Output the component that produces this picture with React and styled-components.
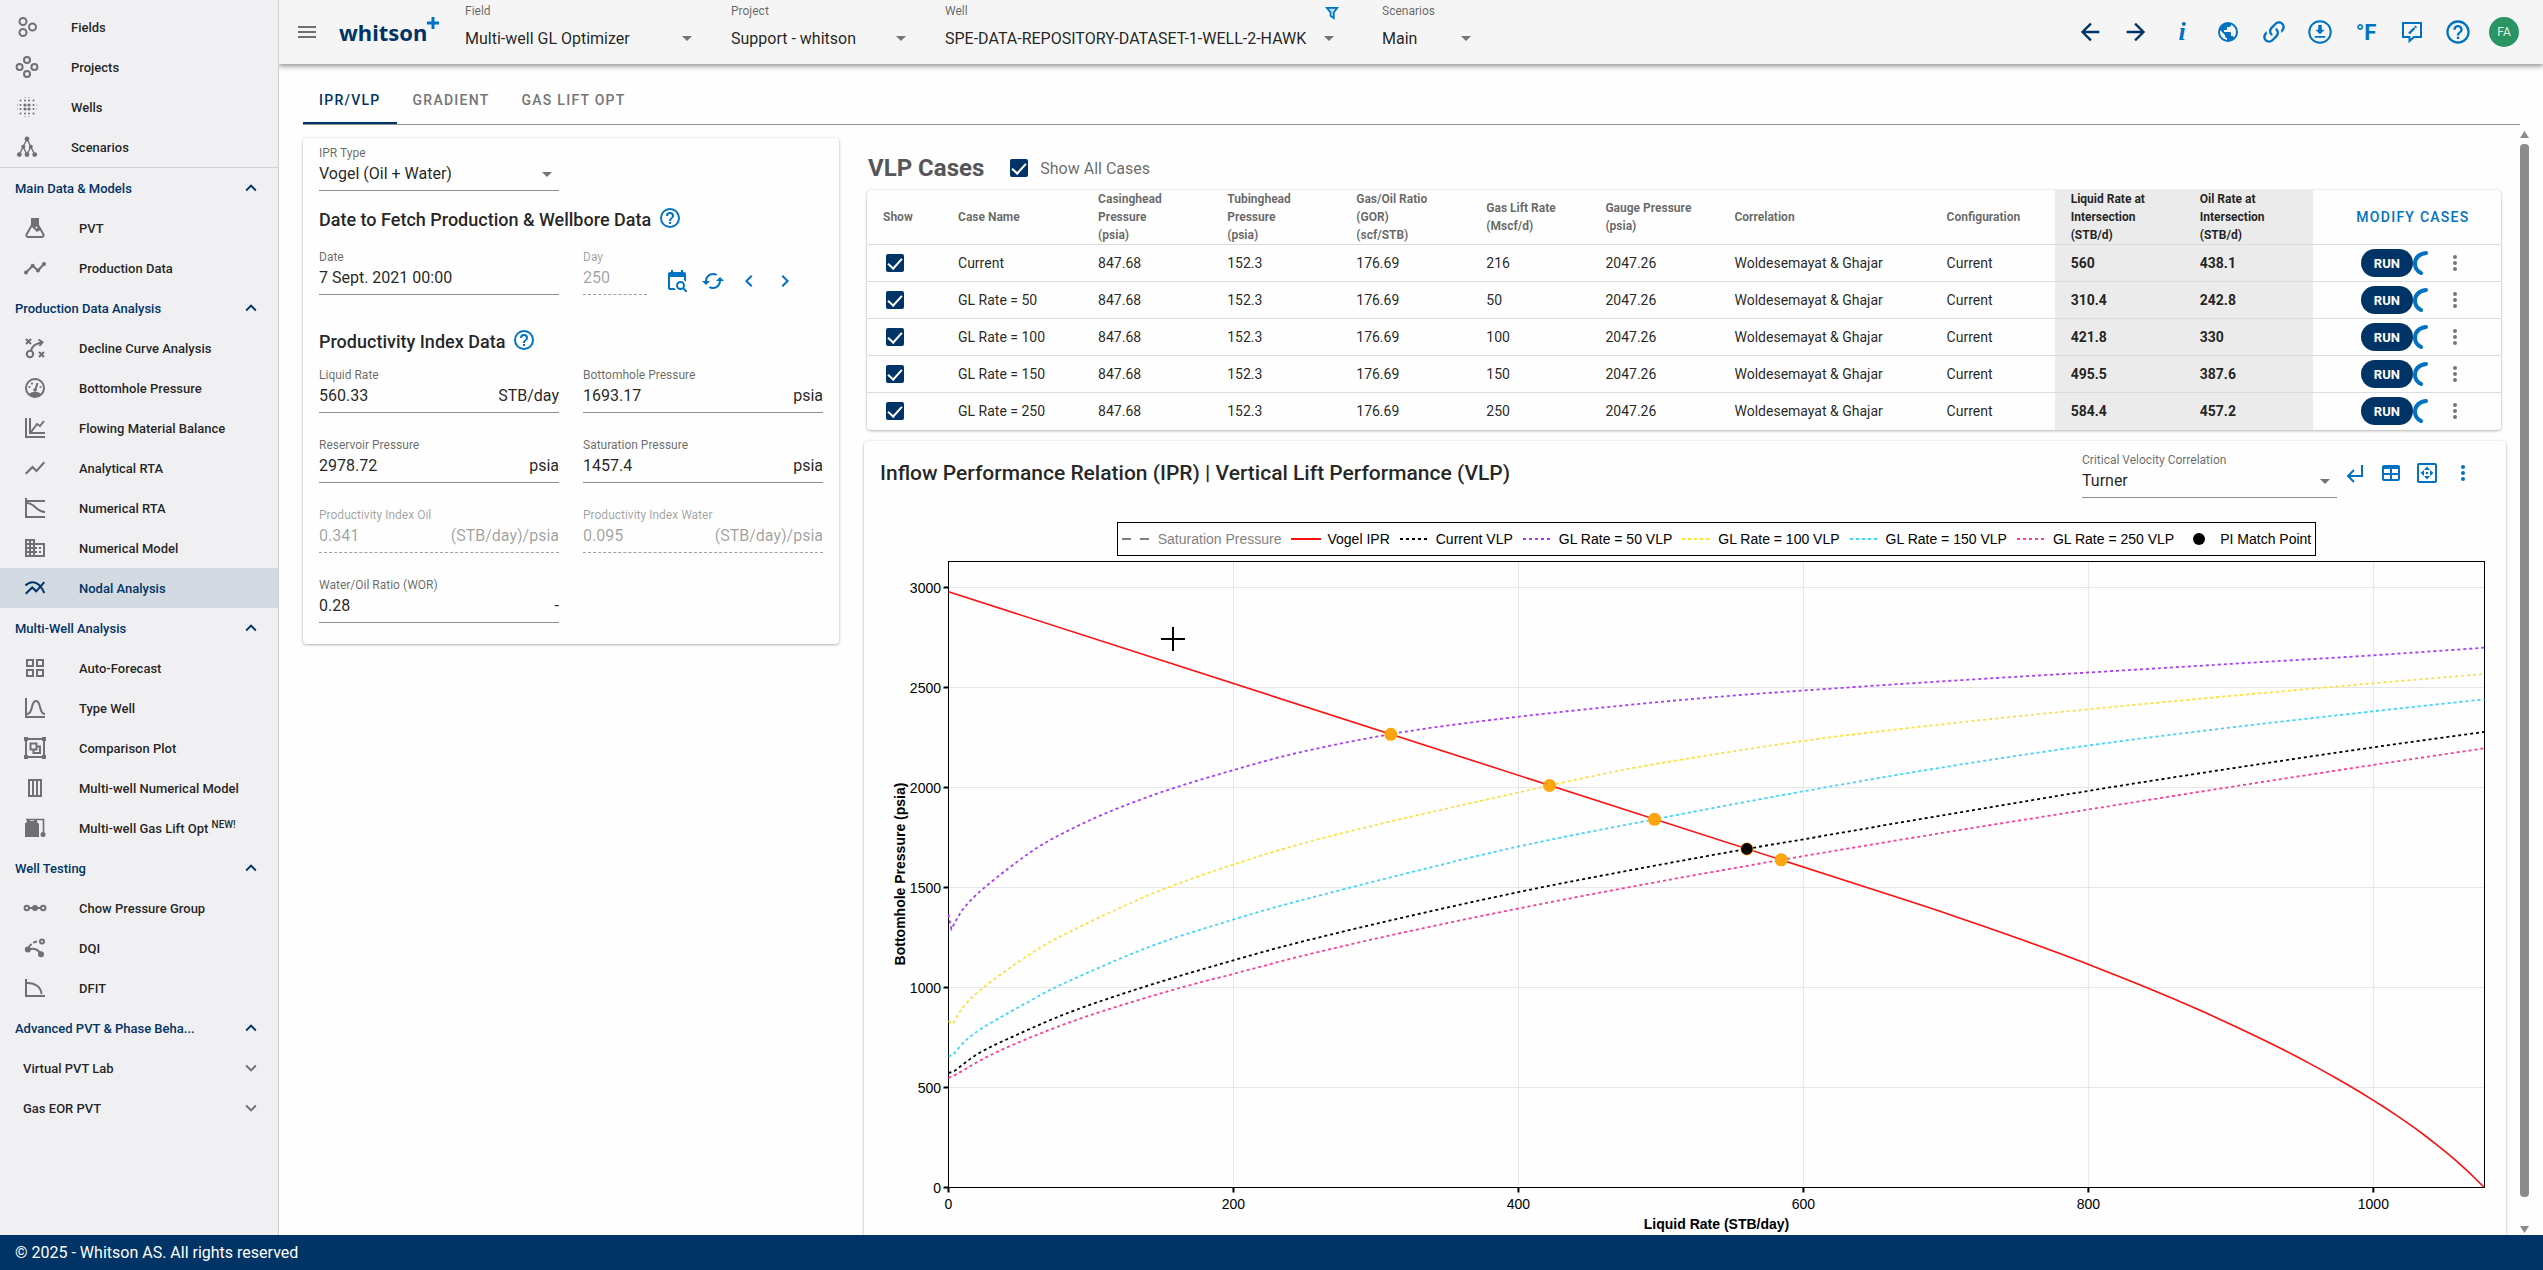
import React from 'react';
import styled, { createGlobalStyle, css } from 'styled-components';

const navy = '#003366';
const blue = '#0072c3';
const text = 'rgba(0,0,0,0.87)';
const muted = 'rgba(0,0,0,0.6)';
const disabled = 'rgba(0,0,0,0.38)';

const GlobalStyle = createGlobalStyle`
    * {
        box-sizing: border-box;
    }
    body {
        margin: 0;
        background: #fefefe;
        color: ${text};
        font-family: Roboto, "Liberation Sans", sans-serif;
        font-size: 14px;
    }
    button, input, select {
        font-family: inherit;
        color: inherit;
    }
`;

/* ---------- icons ---------- */

const Svg = styled.svg`
    display: block;
    flex: none;
    width: ${({$size})=> $size || 24}px;
    height: ${({$size})=> $size || 24}px;
    fill: ${({$line})=> $line ? 'none' : 'currentColor'};
    stroke: ${({$line})=> $line ? 'currentColor' : 'none'};
    stroke-width: 2;
`;

const paths = {
    menu: 'M3,6H21V8H3V6M3,11H21V13H3V11M3,16H21V18H3V16Z',
    chevronUp: 'M7.41,15.41L12,10.83L16.59,15.41L18,14L12,8L6,14L7.41,15.41Z',
    chevronDown: 'M7.41,8.58L12,13.17L16.59,8.58L18,10L12,16L6,10L7.41,8.58Z',
    chevronLeft: 'M15.41,16.58L10.83,12L15.41,7.41L14,6L8,12L14,18L15.41,16.58Z',
    chevronRight: 'M8.59,16.58L13.17,12L8.59,7.41L10,6L16,12L10,18L8.59,16.58Z',
    caret: 'M7,10L12,15L17,10H7Z',
    dots: 'M12,16A2,2 0 0,1 14,18A2,2 0 0,1 12,20A2,2 0 0,1 10,18A2,2 0 0,1 12,16M12,10A2,2 0 0,1 14,12A2,2 0 0,1 12,14A2,2 0 0,1 10,12A2,2 0 0,1 12,10M12,4A2,2 0 0,1 14,6A2,2 0 0,1 12,8A2,2 0 0,1 10,6A2,2 0 0,1 12,4Z',
    arrowLeft: 'M20,11V13H8L13.5,18.5L12.08,19.92L4.16,12L12.08,4.08L13.5,5.5L8,11H20Z',
    arrowRight: 'M4,11V13H16L10.5,18.5L11.92,19.92L19.84,12L11.92,4.08L10.5,5.5L16,11H4Z',
    earth: 'M17.9,17.39C17.64,16.59 16.89,16 16,16H15V13A1,1 0 0,0 14,12H8V10H10A1,1 0 0,0 11,9V7H13A2,2 0 0,0 15,5V4.59C17.93,5.77 20,8.64 20,12C20,14.08 19.2,15.97 17.9,17.39M11,19.93C7.05,19.44 4,16.08 4,12C4,11.38 4.08,10.78 4.21,10.21L9,15V16A2,2 0 0,0 11,18M12,2A10,10 0 0,0 2,12A10,10 0 0,0 12,22A10,10 0 0,0 22,12A10,10 0 0,0 12,2Z',
    help: 'M11,18H13V16H11V18M12,2A10,10 0 0,0 2,12A10,10 0 0,0 12,22A10,10 0 0,0 22,12A10,10 0 0,0 12,2M12,20C7.59,20 4,16.41 4,12C4,7.59 7.59,4 12,4C16.41,4 20,7.59 20,12C20,16.41 16.41,20 12,20M12,6A4,4 0 0,0 8,10H10A2,2 0 0,1 12,8A2,2 0 0,1 14,10C14,12 11,11.75 11,15H13C13,12.75 16,12.5 16,10A4,4 0 0,0 12,6Z',
    link: 'M10.59,13.41C11,13.8 11,14.44 10.59,14.83C10.2,15.22 9.56,15.22 9.17,14.83C7.22,12.88 7.22,9.71 9.17,7.76V7.76L12.71,4.22C14.66,2.27 17.83,2.27 19.78,4.22C21.73,6.17 21.73,9.34 19.78,11.29L18.29,12.78C18.3,11.96 18.17,11.14 17.89,10.36L18.36,9.88C19.54,8.71 19.54,6.81 18.36,5.64C17.19,4.46 15.29,4.46 14.12,5.64L10.59,9.17C9.41,10.34 9.41,12.24 10.59,13.41M13.41,9.17C13.8,8.78 14.44,8.78 14.83,9.17C16.78,11.12 16.78,14.29 14.83,16.24V16.24L11.29,19.78C9.34,21.73 6.17,21.73 4.22,19.78C2.27,17.83 2.27,14.66 4.22,12.71L5.71,11.22C5.7,12.04 5.83,12.86 6.11,13.65L5.64,14.12C4.46,15.29 4.46,17.19 5.64,18.36C6.81,19.54 8.71,19.54 9.88,18.36L13.41,14.83C14.59,13.66 14.59,11.76 13.41,10.59C13,10.2 13,9.56 13.41,9.17Z',
    calendarSearch: 'M15.5,12C18,12 20,14 20,16.5C20,17.38 19.75,18.21 19.31,18.9L22.39,22L21,23.39L17.88,20.32C17.19,20.75 16.37,21 15.5,21C13,21 11,19 11,16.5C11,14 13,12 15.5,12M15.5,14A2.5,2.5 0 0,0 13,16.5A2.5,2.5 0 0,0 15.5,19A2.5,2.5 0 0,0 18,16.5A2.5,2.5 0 0,0 15.5,14M19,8H5V19H9.5C9.81,19.75 10.26,20.42 10.81,21H5C3.89,21 3,20.1 3,19V5C3,3.89 3.89,3 5,3H6V1H8V3H16V1H18V3H19A2,2 0 0,1 21,5V13.03C20.5,12.22 19.8,11.54 19,11V8Z',
    sync: 'M19,8L15,12H18A6,6 0 0,1 12,18C11,18 10.03,17.75 9.2,17.3L7.74,18.76C8.97,19.54 10.43,20 12,20A8,8 0 0,0 20,12H23M6,12A6,6 0 0,1 12,6C13,6 13.97,6.25 14.8,6.7L16.26,5.24C15.03,4.46 13.57,4 12,4A8,8 0 0,0 4,12H1L5,16L9,12',
    table: 'M5,4H19A2,2 0 0,1 21,6V18A2,2 0 0,1 19,20H5A2,2 0 0,1 3,18V6A2,2 0 0,1 5,4M5,8V12H11V8H5M13,8V12H19V8H13M5,14V18H11V14H5M13,14V18H19V14H13Z',
    domain: 'M18,15H16V17H18M18,11H16V13H18M20,19H12V17H14V15H12V13H14V11H12V9H20M10,7H8V5H10M10,11H8V9H10M10,15H8V13H10M10,19H8V17H10M6,7H4V5H6M6,11H4V9H6M6,15H4V13H6M6,19H4V17H6M12,7V3H2V21H22V7H12Z',
    grid: 'M3 11H11V3H3M5 5H9V9H5M13 21H21V13H13M15 15H19V19H15M3 21H11V13H3M5 15H9V19H5M13 3V11H21V3M19 9H15V5H19Z',
    bell: 'M9.96,11.31C10.82,8.1 11.5,6 13,6C14.5,6 15.18,8.1 16.04,11.31C17,14.92 18.1,19 22,19V17C19.8,17 19,14.54 17.97,10.8C17.08,7.46 16.15,4 13,4C9.85,4 8.92,7.46 8.03,10.8C7.03,14.54 6.2,17 4,17V2H2V22H22V20H4V19C7.9,19 9,14.92 9.96,11.31Z',
    lineVariant: 'M3.5,18.5L9.5,12.5L13.5,16.5L22,6.92L20.59,5.5L13.5,13.5L9.5,9.5L2,17L3.5,18.5Z',
};

const Icon = ({name, size})=>(
    <Svg viewBox="0 0 24 24" $size={size} aria-hidden="true"><path fillRule="evenodd" d={paths[name]} /></Svg>
);

const Line = ({size, children})=>(
    <Svg viewBox="0 0 24 24" $size={size} $line aria-hidden="true">{children}</Svg>
);

const Dot = ({x, y, r = 2})=> <circle cx={x} cy={y} r={r} fill="currentColor" stroke="none" />;

const FieldsIcon = ()=>(
    <Line><circle cx="8" cy="6.5" r="3.5" /><circle cx="8" cy="17.5" r="3.5" /><circle cx="17.5" cy="12" r="3.5" /></Line>
);

const ProjectsIcon = ()=>(
    <Line><circle cx="12" cy="5" r="3" /><circle cx="4.6" cy="12" r="3" /><circle cx="19.4" cy="12" r="3" /><circle cx="12" cy="19" r="3" /></Line>
);

const WellsIcon = ()=>(
    <Line>
        {[5.5, 10, 14, 18.5].map(x=> [5.5, 10, 14, 18.5].map(y=>{
            const inner = Math.abs(x - 12) < 3 && Math.abs(y - 12) < 3;
            return <Dot key={`${x}-${y}`} x={x} y={y} r={inner ? 1.6 : 1} />;
        }))}
        {[10, 14].map(v=> [2.5, 21.5].map(e=>(
            <g key={`${v}-${e}`}><Dot x={v} y={e} r={0.5} /><Dot x={e} y={v} r={0.5} /></g>
        )))}
    </Line>
);

const ScenariosIcon = ()=>(
    <Line>
        <path d="M12 4L4.3 19.5M12 4L19.7 19.5M8.2 12L12 19.5M15.8 12L12 19.5" strokeWidth="1.4" />
        <Dot x={12} y={4} r={2.4} /><Dot x={8.2} y={11.8} /><Dot x={15.8} y={11.8} />
        <Dot x={4.3} y={19.6} r={2.4} /><Dot x={12} y={19.6} r={2.4} /><Dot x={19.7} y={19.6} r={2.4} />
    </Line>
);

const FlaskIcon = ()=>(
    <Line>
        <path d="M9 4V9L3.6 18.2A1.8 1.8 0 0 0 5.2 21H18.8A1.8 1.8 0 0 0 20.4 18.2L15 9V4" />
        <path d="M8 2H16V5L15 6V9L17.5 14L14 16L9 11V6L8 5Z" fill="currentColor" stroke="none" />
        <circle cx="13.5" cy="11.5" r="1" fill="#f0f0f3" stroke="none" />
    </Line>
);

const TimelineIcon = ()=>(
    <Line>
        <path d="M3 16.5L9.7 9.8L15 14.5L21 8" />
        <Dot x={3} y={16.5} /><Dot x={9.7} y={9.8} /><Dot x={15} y={14.5} /><Dot x={21} y={8} />
    </Line>
);

const StrategyIcon = ()=>(
    <Line>
        <path d="M3 3L8 8M8 3L3 8M16 16L21 21M21 16L16 21" />
        <circle cx="7" cy="18" r="3.2" />
        <path d="M8 14.5C9 10 12 8 18 6.5M15.5 3.5L19.5 6.2L16.5 10" />
    </Line>
);

const GaugeIcon = ()=>(
    <Line>
        <circle cx="12" cy="12" r="9" />
        <path d="M12 15L14.5 7" />
        <path d="M5.5 18.5C7 16.5 9 16 12 16S17 16.5 18.5 18.5C15 22 9 22 5.5 18.5Z" fill="currentColor" stroke="none" />
        <Dot x={12} y={14} r={1.8} /><Dot x={6.5} y={11} r={1.1} /><Dot x={9} y={7.6} r={1.1} /><Dot x={17.5} y={11} r={1.1} />
    </Line>
);

const BalanceIcon = ()=>(
    <Line><path d="M3 2V21H22M7 2V17H22M8 16L14 8L17 10L21 5" /></Line>
);

const DeclineIcon = ()=>(
    <Line><path d="M3 2V21H22M3 5H22M4 7C12 7 13 16 22 16" /></Line>
);

const NodalIcon = ()=>(
    <Line><path d="M2.7 17.8L9.2 11.5L13.2 15.3L21.3 6.2M2.5 9.5C7 5 15.5 3.5 21.3 17" /></Line>
);

const GroupIcon = ()=>(
    <Line>
        <path d="M3 3H21V21H3ZM7.5 7.5H13.5V13.5H7.5ZM14 10.5H17V17H10.5V14" />
        <path d="M1 1H5V5H1ZM19 1H23V5H19ZM1 19H5V23H1ZM19 19H23V23H19Z" fill="currentColor" stroke="none" />
    </Line>
);

const ColumnsIcon = ()=>(
    <Line><path d="M6 4H18V20H6ZM10 4V20M14 4V20" /></Line>
);

const GasLiftIcon = ()=>(
    <Line>
        <path d="M2 7L4 6V3H7V5H11V3H14V6L16 8V21H2Z" fill="currentColor" stroke="none" />
        <path d="M3 3.5H20.5V18" strokeWidth="1.6" />
        <Dot x={20} y={18.5} r={2.5} />
    </Line>
);

const ChowIcon = ()=>(
    <Line>
        <path d="M6 12H18" />
        <circle cx="3.8" cy="12" r="2.2" /><circle cx="20.2" cy="12" r="2.2" /><Dot x={12} y={12} r={3} />
    </Line>
);

const DqiIcon = ()=>(
    <Line>
        <path d="M5 13.5C10 12 14 12 18 18" />
        <path d="M6 11C8 7.5 12 5 17 5.5" strokeDasharray="4 2" />
        <circle cx="19" cy="5.5" r="2" /><Dot x={4.8} y={13.5} r={3} /><Dot x={18} y={18.2} r={3} />
    </Line>
);

const DfitIcon = ()=>(
    <Line><path d="M3 3V20H22M4 7C12 6.5 18 11 18.5 18" /></Line>
);

const DownloadIcon = ()=>(
    <Line size={28}>
        <circle cx="12" cy="12" r="9.2" strokeWidth="1.7" />
        <path d="M10.5 6H13.5V10H16L12 14L8 10H10.5ZM7.5 15.4H16.5V17H7.5Z" fill="currentColor" stroke="none" />
    </Line>
);

const FeedbackIcon = ()=>(
    <Line>
        <path d="M3 3H21V17H14L9.5 21V17H3Z" />
        <path d="M9 13.5L14.5 8" strokeWidth="2.4" /><path d="M15 7.5L16.2 6.3" strokeWidth="2.4" />
    </Line>
);

const FilterIcon = ()=>(
    <Line size={14}><path d="M3 3H21L15 11V21L9.5 17V11Z" strokeWidth="3" fill="#bfe0fa" /></Line>
);

const ReturnIcon = ()=>(
    <Line><path d="M19 4V15H6M11 9L5 15L11 21" /></Line>
);

const FitIcon = ()=>(
    <Line>
        <rect x="3" y="3" width="18" height="18" rx="1" />
        <path d="M12 5.5L15 9H9ZM12 18.5L9 15H15ZM5.5 12L9 9V15ZM18.5 12L15 15V9Z" fill="currentColor" stroke="none" />
        <Dot x={12} y={12} r={1.2} />
    </Line>
);

/* ---------- shell ---------- */

const Shell = styled.div`
    display: flex;
    flex-direction: column;
    height: 100vh;
    overflow: hidden;
`;

const Upper = styled.div`
    display: flex;
    flex: 1;
    min-height: 0;
`;

const Footer = styled.footer`
    flex: none;
    height: 35px;
    line-height: 35px;
    padding-left: 15px;
    background: ${navy};
    color: #fff;
    font-size: 16px;
`;

const Main = styled.main`
    display: flex;
    flex-direction: column;
    flex: 1;
    min-width: 0;
`;

/* ---------- sidebar ---------- */

const Sidebar = styled.nav`
    flex: none;
    width: 279px;
    padding-top: 7px;
    background: #f0f0f3;
    border-right: 1px solid #cfcfd1;
    font-size: 13px;
    font-weight: 500;
    overflow: hidden;
`;

const NavLink = styled.a`
    display: flex;
    align-items: center;
    height: 40px;
    gap: 32px;
    padding-left: ${({$nested})=> $nested ? 23 : 15}px;
    color: ${text};
    text-decoration: none;

    svg {
        color: #707073;
    }

    ${({$active})=> $active && css`
        background: #d3dae2;
        color: ${navy};

        svg {
            color: ${navy};
        }
    `}
`;

const NavTop = styled.div`
    border-bottom: 1px solid #d4d4d6;
`;

const NavButton = styled.button`
    display: flex;
    align-items: center;
    justify-content: space-between;
    width: 100%;
    height: 40px;
    padding: 0 16px 0 ${({$sub})=> $sub ? 23 : 15}px;
    border: 0;
    background: none;
    font-size: 13px;
    font-weight: 500;
    color: ${({$sub})=> $sub ? text : navy};

    svg {
        color: ${({$sub})=> $sub ? '#707073' : navy};
    }
`;

const NewTag = styled.sup`
    font-size: 10px;
    line-height: 10px;
`;

const topLinks = [
    ['Fields', FieldsIcon],
    ['Projects', ProjectsIcon],
    ['Wells', WellsIcon],
    ['Scenarios', ScenariosIcon],
];

const sections = [
    {title: 'Main Data & Models', links: [
        ['PVT', <FlaskIcon />],
        ['Production Data', <TimelineIcon />],
    ]},
    {title: 'Production Data Analysis', links: [
        ['Decline Curve Analysis', <StrategyIcon />],
        ['Bottomhole Pressure', <GaugeIcon />],
        ['Flowing Material Balance', <BalanceIcon />],
        ['Analytical RTA', <Icon name="lineVariant" />],
        ['Numerical RTA', <DeclineIcon />],
        ['Numerical Model', <Icon name="domain" />],
        ['Nodal Analysis', <NodalIcon />],
    ]},
    {title: 'Multi-Well Analysis', links: [
        ['Auto-Forecast', <Icon name="grid" />],
        ['Type Well', <Icon name="bell" />],
        ['Comparison Plot', <GroupIcon />],
        ['Multi-well Numerical Model', <ColumnsIcon />],
        ['Multi-well Gas Lift Opt', <GasLiftIcon />, 'NEW!'],
    ]},
    {title: 'Well Testing', links: [
        ['Chow Pressure Group', <ChowIcon />],
        ['DQI', <DqiIcon />],
        ['DFIT', <DfitIcon />],
    ]},
    {title: 'Advanced PVT & Phase Beha...', links: []},
];

const SideNav = ()=>(
    <Sidebar>
        <NavTop>
            {topLinks.map(([label, TopIcon])=>(
                <NavLink key={label} href="#"><TopIcon />{label}</NavLink>
            ))}
        </NavTop>
        {sections.map(({title, links})=>(
            <div key={title}>
                <NavButton>{title}<Icon name="chevronUp" size={22} /></NavButton>
                {links.map(([label, icon, tag])=>(
                    <NavLink key={label} href="#" $nested $active={label === 'Nodal Analysis'}>
                        {icon}
                        <span>{label} {tag && <NewTag>{tag}</NewTag>}</span>
                    </NavLink>
                ))}
            </div>
        ))}
        <NavButton $sub>Virtual PVT Lab<Icon name="chevronDown" size={22} /></NavButton>
        <NavButton $sub>Gas EOR PVT<Icon name="chevronDown" size={22} /></NavButton>
    </Sidebar>
);

/* ---------- form parts ---------- */

const FieldBox = styled.div`
    position: relative;
    width: ${({$width})=> $width || 240}px;
    color: ${({$disabled})=> $disabled ? disabled : text};
`;

const FieldLabel = styled.label`
    display: block;
    height: 16px;
    line-height: 16px;
    font-size: 12px;
    color: ${({$disabled})=> $disabled ? disabled : muted};
`;

const Control = styled.div`
    display: flex;
    align-items: center;
    height: 30px;
    padding-bottom: 3px;
    border-bottom: 1px ${({$disabled})=> $disabled ? 'dashed #a0a0a0' : 'solid #8c8c8c'};
    font-size: 16px;
    line-height: 24px;

    input, select {
        flex: 1;
        width: 0;
        min-width: 0;
        padding: 0;
        border: 0;
        outline: 0;
        background: none;
        appearance: none;
        font-size: 16px;
        line-height: 24px;
        color: inherit;
    }

    svg {
        color: #757575;
        pointer-events: none;
    }
`;

const slug = (label)=> label.toLowerCase().replace(/[^a-z]+/g, '-');

const InputField = ({label, value, unit, width, off})=>(
    <FieldBox $width={width} $disabled={off}>
        <FieldLabel htmlFor={slug(label)} $disabled={off}>{label}</FieldLabel>
        <Control $disabled={off}>
            <input id={slug(label)} defaultValue={value} disabled={off} />
            {unit}
        </Control>
    </FieldBox>
);

const SelectField = ({label, value, width})=>(
    <FieldBox $width={width}>
        <FieldLabel htmlFor={slug(label)}>{label}</FieldLabel>
        <Control>
            <select id={slug(label)}><option>{value}</option></select>
            <Icon name="caret" />
        </Control>
    </FieldBox>
);

const IconButton = styled.button`
    display: flex;
    align-items: center;
    justify-content: center;
    flex: none;
    width: ${({$width})=> $width || 36}px;
    height: 36px;
    padding: 0;
    border: 0;
    background: none;
    color: ${({$color})=> $color || blue};
`;

const Checkbox = styled.input.attrs({type: 'checkbox', defaultChecked: true})`
    display: flex;
    align-items: center;
    justify-content: center;
    appearance: none;
    width: 18px;
    height: 18px;
    margin: 0;
    border-radius: 2px;
    background: ${navy};

    &:checked::after {
        content: '';
        width: 6px;
        height: 12px;
        margin-bottom: 3px;
        border: solid #fff;
        border-width: 0 2px 2px 0;
        transform: rotate(42deg);
    }
`;

/* ---------- top bar ---------- */

const TopBar = styled.header`
    display: flex;
    flex: none;
    height: 64px;
    padding: 0 16px 0 7px;
    background: #f5f5f5;
    box-shadow: 0 2px 4px rgba(0,0,0,0.3), 0 4px 6px rgba(0,0,0,0.12);
    clip-path: inset(0 0 -14px 0);
`;

const Brand = styled.a`
    display: flex;
    align-items: center;
    width: 126px;
    margin-left: 11px;
    color: ${navy};
    font-family: "Noto Sans", "Open Sans", sans-serif;
    font-size: 22px;
    font-weight: 700;
    text-decoration: none;

    svg {
        margin-bottom: 18px;
        color: ${blue};
    }
`;

const BarMiddle = styled.div`
    display: flex;
    align-items: center;
`;

const BarField = styled.div`
    position: relative;
    align-self: flex-start;
    width: ${({$width})=> $width}px;
    margin-right: ${({$spaced})=> $spaced ? 41 : 32}px;
    padding-top: 3px;

    select {
        display: block;
        width: 100%;
        height: 38px;
        padding: 0;
        border: 0;
        outline: 0;
        background: none;
        appearance: none;
        font-size: 16px;
        color: ${text};
    }
`;

const Caret = styled.span`
    position: absolute;
    right: 0;
    bottom: 7px;
    color: #757575;
    pointer-events: none;
`;

const FilterButton = styled.button`
    position: absolute;
    right: 2px;
    top: 6px;
    padding: 0;
    border: 0;
    background: none;
    color: ${blue};
`;

const Actions = styled.div`
    display: flex;
    align-items: center;
    margin-left: auto;
`;

const InfoGlyph = styled.span`
    font: italic 700 26px "Liberation Serif", serif;
`;

const UnitGlyph = styled.span`
    font-size: 22px;
    font-weight: 700;
`;

const Avatar = styled.span`
    width: 30px;
    height: 30px;
    border-radius: 50%;
    background: #289563;
    color: #e3f0e9;
    font-size: 12px;
    line-height: 30px;
    text-align: center;
`;

const barFields = [
    ['Field', 'Multi-well GL Optimizer', 234],
    ['Project', 'Support - whitson', 182],
    ['Well', 'SPE-DATA-REPOSITORY-DATASET-1-WELL-2-HAWK', 396],
    ['Scenarios', 'Main', 96],
];

const Header = ()=>(
    <TopBar>
        <BarMiddle>
            <IconButton aria-label="Menu" $color="#707070" $width={42}><Icon name="menu" /></IconButton>
            <Brand href="#">
                whitson
                <Svg viewBox="0 0 12 12" $size={12} $line><path d="M6 0V12M0 6H12" strokeWidth="3" /></Svg>
            </Brand>
            {barFields.map(([label, value, width])=>(
                <BarField key={label} $width={width} $spaced={label === 'Well'}>
                    <FieldLabel htmlFor={`bar-${label}`}>{label}</FieldLabel>
                    <select id={`bar-${label}`}><option>{value}</option></select>
                    <Caret><Icon name="caret" /></Caret>
                    {label === 'Well' && <FilterButton aria-label="Filter wells"><FilterIcon /></FilterButton>}
                </BarField>
            ))}
        </BarMiddle>
        <Actions>
            <IconButton $width={46} $color={navy} aria-label="Back"><Icon name="arrowLeft" size={28} /></IconButton>
            <IconButton $width={46} $color={navy} aria-label="Forward"><Icon name="arrowRight" size={28} /></IconButton>
            <IconButton $width={46} aria-label="Info"><InfoGlyph>i</InfoGlyph></IconButton>
            <IconButton $width={46} aria-label="Language"><Icon name="earth" /></IconButton>
            <IconButton $width={46} aria-label="Copy link"><Icon name="link" size={28} /></IconButton>
            <IconButton $width={46} aria-label="Download"><DownloadIcon /></IconButton>
            <IconButton $width={46} aria-label="Units"><UnitGlyph>°F</UnitGlyph></IconButton>
            <IconButton $width={46} aria-label="Feedback"><FeedbackIcon /></IconButton>
            <IconButton $width={46} aria-label="Help"><Icon name="help" size={28} /></IconButton>
            <IconButton $width={46} aria-label="Account"><Avatar>FA</Avatar></IconButton>
        </Actions>
    </TopBar>
);

/* ---------- tabs ---------- */

const TabBar = styled.div`
    display: flex;
    flex: none;
    height: 49px;
    margin: 12px 23px 0 24px;
    border-bottom: 1px solid #939393;
`;

const Tab = styled.button`
    height: 48px;
    padding: 2px 16px 0;
    border: 0;
    border-bottom: 2px solid ${({$active})=> $active ? navy : 'transparent'};
    background: none;
    color: ${({$active})=> $active ? navy : '#757575'};
    font-size: 14px;
    font-weight: 500;
    letter-spacing: 0.09em;
    text-transform: uppercase;
`;

/* ---------- body ---------- */

const Body = styled.div`
    display: flex;
    flex: 1;
    min-height: 0;
    padding: 0 14px 0 24px;
    overflow: hidden;
`;

const cardShadow = css`
    background: #fefefe;
    border-radius: 4px;
    box-shadow: 0 1px 3px rgba(0,0,0,0.28), 0 0 2px rgba(0,0,0,0.08);
`;

const InputCard = styled.section`
    ${cardShadow}
    flex: none;
    align-self: flex-start;
    width: 536px;
    margin: 13px 25px 0 0;
    padding: 7px 16px 21px;
`;

const FormRow = styled.div`
    display: flex;
    gap: 24px;
    margin-bottom: ${({$gap})=> $gap || 0}px;
`;

const DateActions = styled.div`
    display: flex;
    padding-top: 14px;
    margin-left: -12px;
`;

const FormTitle = styled.h3`
    display: flex;
    align-items: center;
    gap: 7px;
    height: 52px;
    margin: ${({$spaced})=> $spaced ? 16 : 2}px 0 ${({$spaced})=> $spaced ? 0 : 4}px;
    font-size: 18px;
    font-weight: 500;

    svg {
        margin-bottom: 3px;
        color: ${blue};
    }
`;

const Inputs = ()=>(
    <InputCard>
        <SelectField label="IPR Type" value="Vogel (Oil + Water)" />
        <FormTitle>Date to Fetch Production &amp; Wellbore Data <Icon name="help" /></FormTitle>
        <FormRow>
            <InputField label="Date" value="7 Sept. 2021 00:00" />
            <InputField label="Day" value="250" width={64} off />
            <DateActions>
                <IconButton aria-label="Pick date"><Icon name="calendarSearch" /></IconButton>
                <IconButton aria-label="Refresh"><Icon name="sync" /></IconButton>
                <IconButton aria-label="Previous"><Icon name="chevronLeft" /></IconButton>
                <IconButton aria-label="Next"><Icon name="chevronRight" /></IconButton>
            </DateActions>
        </FormRow>
        <FormTitle $spaced>Productivity Index Data <Icon name="help" /></FormTitle>
        <FormRow $gap={24}>
            <InputField label="Liquid Rate" value="560.33" unit="STB/day" />
            <InputField label="Bottomhole Pressure" value="1693.17" unit="psia" />
        </FormRow>
        <FormRow $gap={24}>
            <InputField label="Reservoir Pressure" value="2978.72" unit="psia" />
            <InputField label="Saturation Pressure" value="1457.4" unit="psia" />
        </FormRow>
        <FormRow $gap={24}>
            <InputField label="Productivity Index Oil" value="0.341" unit="(STB/day)/psia" off />
            <InputField label="Productivity Index Water" value="0.095" unit="(STB/day)/psia" off />
        </FormRow>
        <InputField label="Water/Oil Ratio (WOR)" value="0.28" unit="-" />
    </InputCard>
);

/* ---------- cases table ---------- */

const Results = styled.div`
    flex: 1;
    min-width: 0;
    padding-top: 21px;
`;

const CasesHead = styled.div`
    display: flex;
    align-items: center;
    height: 44px;
    padding-left: 4px;
    color: ${muted};

    h2 {
        margin: 0 26px 0 0;
        font-size: 24px;
        font-weight: 700;
        color: #55565a;
    }

    label {
        display: flex;
        align-items: center;
        gap: 12px;
        font-size: 16px;
    }
`;

const TableCard = styled.div`
    ${cardShadow}
    margin: 0 5px 11px 3px;
`;

const Table = styled.table`
    width: 100%;
    table-layout: fixed;
    border-collapse: collapse;
`;

const Th = styled.th`
    width: ${({$width})=> $width}px;
    height: 54px;
    padding: 0 0 0 16px;
    border-bottom: 1px solid #dcdcdc;
    background: ${({$shade})=> $shade ? '#ebebeb' : 'none'};
    color: ${({$shade})=> $shade ? text : muted};
    font-size: 12px;
    font-weight: 700;
    line-height: 18px;
    text-align: left;
    white-space: pre-line;
`;

const Td = styled.td`
    height: 37px;
    padding: 0 0 0 16px;
    border-bottom: 1px solid #dcdcdc;
    background: ${({$shade})=> $shade ? '#ebebeb' : 'none'};
    font-weight: ${({$shade})=> $shade ? 700 : 400};

    tr:last-child > & {
        border-bottom: 0;
    }

    ${Checkbox} {
        margin-left: 3px;
    }
`;

const ActionCell = styled.div`
    display: flex;
    align-items: center;
    justify-content: center;
    padding-right: ${({$head})=> $head ? 4 : 0}px;
    padding-left: ${({$head})=> $head ? 0 : 4}px;
`;

const RunButton = styled.button`
    width: 52px;
    height: 28px;
    padding: 0;
    border: 0;
    border-radius: 14px;
    background: ${navy};
    color: #fff;
    font-size: 13px;
    font-weight: 700;
`;

const Spinner = styled.svg`
    width: 16px;
    height: 28px;
    margin-right: 8px;
    fill: none;
    stroke: ${blue};
    stroke-width: 4;
    stroke-linecap: round;
`;

const ModifyButton = styled.button`
    padding: 0;
    border: 0;
    background: none;
    color: ${blue};
    font-size: 14px;
    font-weight: 500;
    letter-spacing: 0.09em;
`;

const columns = [
    ['Show', 75],
    ['Case Name', 140],
    ['Casinghead\nPressure\n(psia)', 129],
    ['Tubinghead\nPressure\n(psia)', 129],
    ['Gas/Oil Ratio\n(GOR)\n(scf/STB)', 130],
    ['Gas Lift Rate\n(Mscf/d)', 119],
    ['Gauge Pressure\n(psia)', 129],
    ['Correlation', 212],
    ['Configuration', 124],
    ['Liquid Rate at\nIntersection\n(STB/d)', 129],
    ['Oil Rate at\nIntersection\n(STB/d)', 129],
];

const cases = [
    ['Current', 216, 560, 438.1],
    ['GL Rate = 50', 50, 310.4, 242.8],
    ['GL Rate = 100', 100, 421.8, 330],
    ['GL Rate = 150', 150, 495.5, 387.6],
    ['GL Rate = 250', 250, 584.4, 457.2],
];

const Cases = ()=>(
    <>
        <CasesHead>
            <h2>VLP Cases</h2>
            <label><Checkbox /> Show All Cases</label>
        </CasesHead>
        <TableCard>
            <Table>
                <thead>
                    <tr>
                        {columns.map(([label, width], index)=>(
                            <Th key={label} $width={width} $shade={index > 8}>{label}</Th>
                        ))}
                        <Th $width={188}>
                            <ActionCell $head><ModifyButton>MODIFY CASES</ModifyButton></ActionCell>
                        </Th>
                    </tr>
                </thead>
                <tbody>
                    {cases.map(([name, glr, liquid, oil])=>(
                        <tr key={name}>
                            <Td><Checkbox aria-label={`Show ${name}`} /></Td>
                            <Td>{name}</Td>
                            <Td>847.68</Td>
                            <Td>152.3</Td>
                            <Td>176.69</Td>
                            <Td>{glr}</Td>
                            <Td>2047.26</Td>
                            <Td>Woldesemayat &amp; Ghajar</Td>
                            <Td>Current</Td>
                            <Td $shade>{liquid}</Td>
                            <Td $shade>{oil}</Td>
                            <Td>
                                <ActionCell>
                                    <RunButton>RUN</RunButton>
                                    <Spinner viewBox="0 0 16 28"><path d="M13 4C6 5 2 9 2 15C2 19 4 22 8 24" /></Spinner>
                                    <IconButton $color="#757575" aria-label={`${name} options`}><Icon name="dots" /></IconButton>
                                </ActionCell>
                            </Td>
                        </tr>
                    ))}
                </tbody>
            </Table>
        </TableCard>
    </>
);

/* ---------- chart ---------- */

const ChartCard = styled.section`
    ${cardShadow}
`;

const ChartHead = styled.div`
    display: flex;
    align-items: center;
    height: 64px;
    padding: 0 25px 0 16px;

    h2 {
        flex: 1;
        margin: 0;
        font-size: 21px;
        font-weight: 500;
    }

    ${FieldBox} {
        margin-top: 4px;
    }
`;

const LegendRow = styled.div`
    display: flex;
    justify-content: center;
    margin-top: 17px;
    padding: 0 21px 0 84px;
`;

const Legend = styled.div`
    display: flex;
    align-items: center;
    gap: 10px;
    height: 34px;
    padding: 0 4px;
    border: 1px solid #000;
    font-family: "Liberation Sans", sans-serif;
    font-size: 14px;
    color: #000;
`;

const LegendItem = styled.span`
    display: flex;
    align-items: center;
    gap: 6px;
    opacity: ${({$faded})=> $faded ? 0.5 : 1};
    white-space: nowrap;

    svg {
        width: 30px;
        height: 14px;
    }
`;

const Plot = styled.svg`
    display: block;
    width: 100%;
    font-family: "Liberation Sans", sans-serif;
    font-size: 14px;
`;

const AxisTitle = styled.text`
    font-weight: 700;
    text-anchor: middle;
`;

const series = [
    {name: 'GL Rate = 50 VLP', color: '#a83bff', points: [
        [0, 1365], [2, 1292], [10, 1390], [25, 1498], [59.7, 1687], [84.7, 1787], [115, 1885], [155, 1990], [200, 2087],
        [243, 2170], [310.4, 2267], [370, 2328], [450, 2393], [534, 2450], [600, 2485], [700, 2532], [800, 2575], [900, 2618], [1000, 2661], [1078, 2699]]},
    {name: 'GL Rate = 100 VLP', color: '#ffe03b', points: [
        [0, 832], [3, 818], [10, 900], [25, 1003], [63.5, 1195], [96, 1317], [146, 1478], [200, 1615],
        [250, 1723], [312, 1833], [400, 1975], [470, 2083], [534, 2162], [600, 2233], [650, 2278], [730, 2341], [800, 2391], [900, 2458], [1000, 2521], [1078, 2568]]},
    {name: 'GL Rate = 150 VLP', color: '#3bd5ff', points: [
        [0, 656], [3, 662], [12, 735], [25, 803], [58, 936], [77, 1008], [142, 1206], [200, 1340],
        [240, 1422], [316, 1561], [400, 1705], [495.5, 1841], [600, 1981], [706, 2110], [800, 2210], [900, 2300], [1000, 2381], [1078, 2441]]},
    {name: 'Current VLP', color: '#000', points: [
        [0, 572], [4, 582], [21, 670], [46, 757], [85, 876], [139, 1007], [200, 1136],
        [243, 1220], [316, 1345], [400, 1477], [470, 1575], [560.3, 1693], [600, 1741], [687, 1848], [800, 1983], [900, 2095], [1000, 2201], [1078, 2278]]},
    {name: 'GL Rate = 250 VLP', color: '#ff3b95', points: [
        [0, 548], [4, 560], [27, 653], [50, 728], [85, 826], [123, 915], [165, 1003], [200, 1068],
        [250, 1161], [316, 1270], [400, 1395], [490, 1518], [584.4, 1638], [706, 1783], [800, 1890], [900, 2003], [1000, 2113], [1078, 2196]]},
];

const intersections = [[310.4, 2266], [421.8, 2010], [495.5, 1841], [560.3, 1693], [584.4, 1638.5]];

const left = 84.5;
const right = 1620.5;
const top = 5.5;
const bottom = 631.5;
const maxRate = 1078;

const px = (q)=> left + q * (right - left) / maxRate;
const py = (p)=> bottom - p / 5;

// straight above the saturation pressure, Vogel oil + linear water below it
const vogelPath = ()=>{
    const pr = 2978.72;
    const pb = 1457.4;
    const pi = 560.33 / (pr - 1693.17);
    const water = pi * 0.28 / 1.28;
    const oil = pi - water;
    const points = [[0, pr]];
    for (let i = 0; i <= 40; i++) {
        const x = 1 - i / 40;
        const q = pi * (pr - pb) + water * pb * (1 - x) + oil * pb / 1.8 * (1 - 0.2 * x - 0.8 * x * x);
        points.push([q, x * pb]);
    }
    return points.map(([q, p], i)=> `${i ? 'L' : 'M'}${px(q).toFixed(1)},${py(p).toFixed(1)}`).join('');
};

const curvePath = (points)=>{
    const pts = points.map(([q, p])=> [px(q), py(p)]);
    const slope = (i)=>{
        const a = pts[Math.max(i - 1, 1)];
        const b = pts[Math.min(i + 1, pts.length - 1)];
        return (b[1] - a[1]) / (b[0] - a[0]);
    };
    let d = `M${pts[0]}L${pts[1]}`;
    for (let i = 1; i < pts.length - 1; i++) {
        const [x0, y0] = pts[i];
        const [x1, y1] = pts[i + 1];
        const h = (x1 - x0) / 3;
        d += `C${x0 + h},${y0 + slope(i) * h} ${x1 - h},${y1 - slope(i + 1) * h} ${x1},${y1}`;
    }
    return d;
};

const legend = [
    ['Saturation Pressure', '#000', '9 9'],
    ['Vogel IPR', '#ff0f0f'],
    ['Current VLP', '#000', '3 3'],
    ['GL Rate = 50 VLP', '#a83bff', '3 3'],
    ['GL Rate = 100 VLP', '#ffe03b', '3 3'],
    ['GL Rate = 150 VLP', '#3bd5ff', '3 3'],
    ['GL Rate = 250 VLP', '#ff3b95', '3 3'],
    ['PI Match Point'],
];

const Chart = ()=>(
    <ChartCard>
        <ChartHead>
            <h2>Inflow Performance Relation (IPR) | Vertical Lift Performance (VLP)</h2>
            <SelectField label="Critical Velocity Correlation" value="Turner" width={255} />
            <IconButton aria-label="Reset"><ReturnIcon /></IconButton>
            <IconButton aria-label="Data table"><Icon name="table" /></IconButton>
            <IconButton aria-label="Fit to screen"><FitIcon /></IconButton>
            <IconButton aria-label="Plot options"><Icon name="dots" /></IconButton>
        </ChartHead>
        <LegendRow>
            <Legend>
                {legend.map(([name, color, dash])=>(
                    <LegendItem key={name} $faded={dash === '9 9'}>
                        <svg viewBox="0 0 30 14">
                            {color
                                ? <path d="M0 7H30" stroke={color} strokeWidth="2" strokeDasharray={dash} />
                                : <circle cx="15" cy="7" r="6" />}
                        </svg>
                        {name}
                    </LegendItem>
                ))}
            </Legend>
        </LegendRow>
        <Plot viewBox="0 0 1642 700">
            {[200, 400, 600, 800, 1000].map(q=>(
                <path key={q} d={`M${px(q)} ${top}V${bottom}`} stroke="#e6e6e6" />
            ))}
            {[500, 1000, 1500, 2000, 2500, 3000].map(p=>(
                <path key={p} d={`M${left} ${py(p)}H${right}`} stroke="#e6e6e6" />
            ))}
            <rect x={left} y={top} width={right - left} height={bottom - top} fill="none" stroke="#000" />
            {[0, 200, 400, 600, 800, 1000].map(q=>(
                <g key={q}>
                    <path d={`M${px(q)} ${bottom}v5`} stroke="#000" strokeWidth="2" />
                    <text x={px(q)} y="653" textAnchor="middle">{q}</text>
                </g>
            ))}
            {[0, 500, 1000, 1500, 2000, 2500, 3000].map(p=>(
                <g key={p}>
                    <path d={`M${left} ${py(p)}h-5`} stroke="#000" strokeWidth="2" />
                    <text x="77" y={py(p) + 5} textAnchor="end">{p}</text>
                </g>
            ))}
            <path d={vogelPath()} fill="none" stroke="#ff0f0f" strokeWidth="1.6" />
            {series.map(({name, color, points})=>(
                <path key={name} d={curvePath(points)} fill="none" stroke={color} strokeWidth="1.8" strokeDasharray="3 3" />
            ))}
            {intersections.map(([q, p])=>(
                <circle key={q} cx={px(q)} cy={py(p)} r="6.5" fill="#fca510" />
            ))}
            <circle cx={px(560.3)} cy={py(1693)} r="5.8" />
            <path d="M297 83H321M309 71V95" stroke="#000" strokeWidth="2" />
            <AxisTitle x={(left + right) / 2} y="673">Liquid Rate (STB/day)</AxisTitle>
            <AxisTitle transform="translate(41 318) rotate(-90)">Bottomhole Pressure (psia)</AxisTitle>
        </Plot>
    </ChartCard>
);

/* ---------- scroll rail ---------- */

const Rail = styled.div`
    display: flex;
    flex: none;
    flex-direction: column;
    align-items: center;
    width: 9px;
    margin-left: 14px;
    padding: 6px 0 2px;
`;

const Thumb = styled.div`
    flex: 1;
    width: 9px;
    margin: 6px 0 29px;
    border-radius: 4px;
    background: #8b8b8b;
`;

const RailArrow = styled.svg`
    display: block;
    width: 9px;
    height: 7px;
    fill: #8b8b8b;
`;

const App = ()=>{
    return(
        <Shell>
            <GlobalStyle />
            <Upper>
                <SideNav />
                <Main>
                    <Header />
                    <TabBar role="tablist">
                        <Tab role="tab" $active>IPR/VLP</Tab>
                        <Tab role="tab">Gradient</Tab>
                        <Tab role="tab">Gas Lift Opt</Tab>
                    </TabBar>
                    <Body>
                        <Inputs />
                        <Results>
                            <Cases />
                            <Chart />
                        </Results>
                        <Rail>
                            <RailArrow viewBox="0 0 9 7"><path d="M4.5 0L9 7H0Z" /></RailArrow>
                            <Thumb />
                            <RailArrow viewBox="0 0 9 7"><path d="M0 0H9L4.5 7Z" /></RailArrow>
                        </Rail>
                    </Body>
                </Main>
            </Upper>
            <Footer>© 2025 - Whitson AS. All rights reserved</Footer>
        </Shell>
    );
}

export default App;
